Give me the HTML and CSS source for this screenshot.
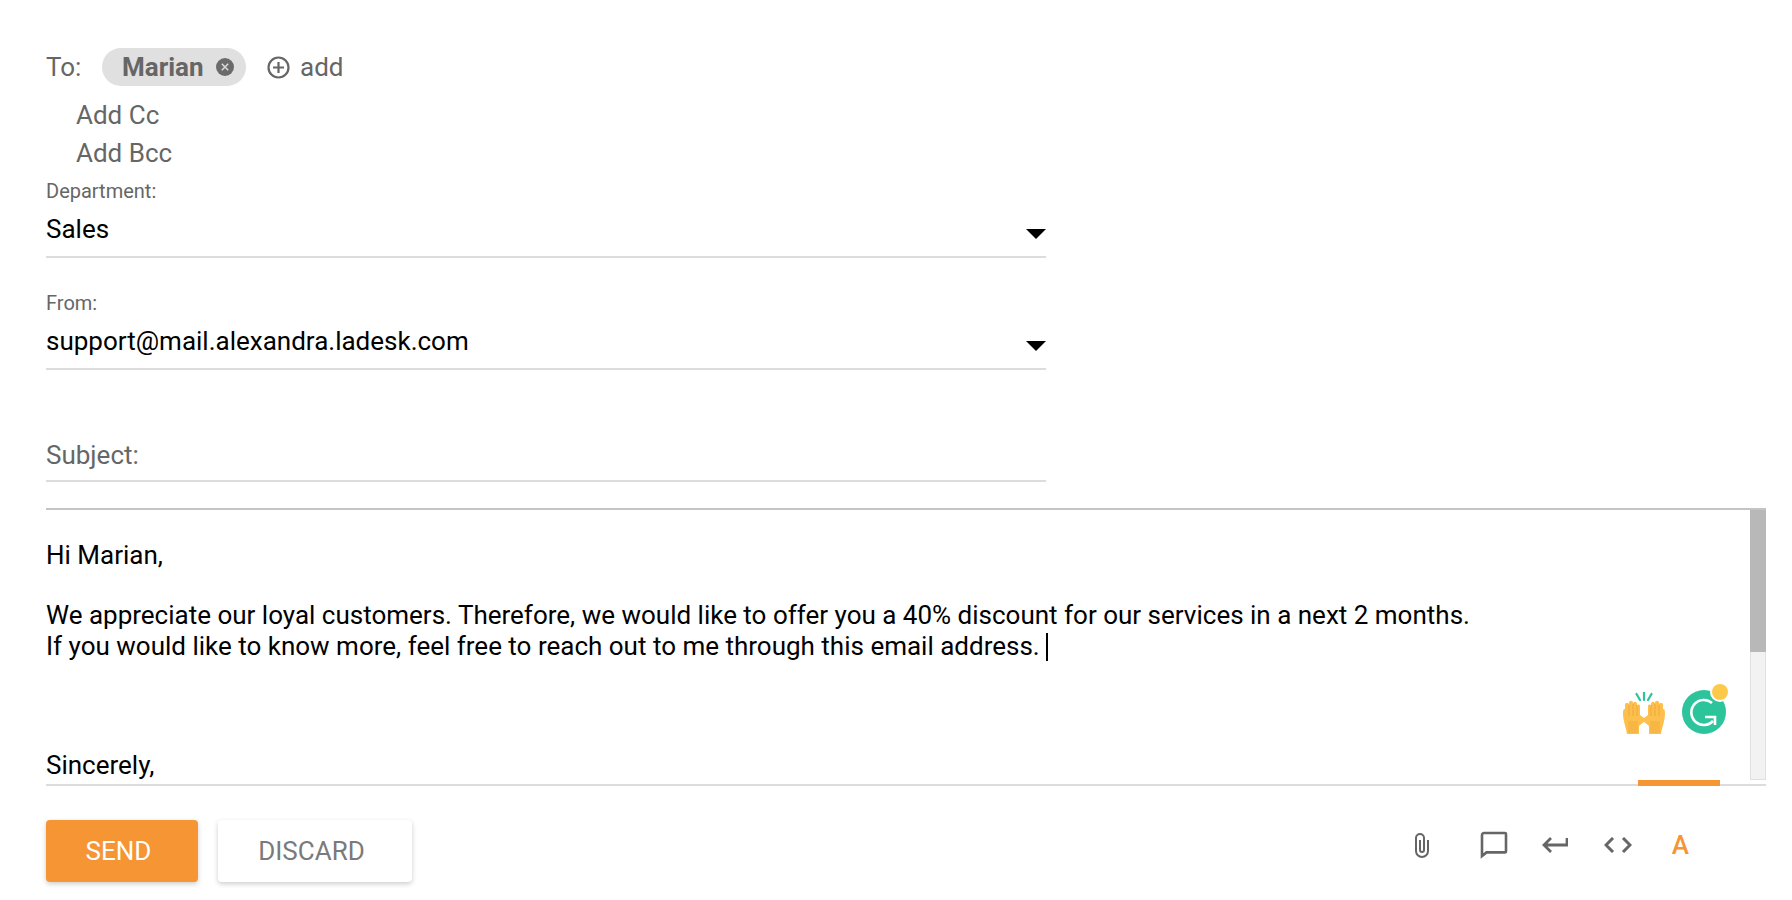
FILE: index.html
```html
<!DOCTYPE html>
<html lang="en">
<head>
  <meta charset="UTF-8" />
  <title>Compose email</title>
  <link rel="stylesheet" href="styles.css">
</head>
<body>

<div class="composer">
  <div class="to-row">
    <span class="to-label">To:</span>
    <span class="chip">
      <span class="chip-name">Marian</span>
      <svg class="chip-close" width="18" height="18" viewBox="0 0 18 18">
        <circle cx="9" cy="9" r="9" fill="#6b6b6b"/>
        <path d="M5.800 5.800l6.400 6.400M12.200 5.800l-6.400 6.400" stroke="#d8d8d8" stroke-width="1.600"/>
      </svg>
    </span>
    <span class="add-recipient">
      <svg width="23" height="23" viewBox="0 0 23 23" fill="none" stroke="#666" stroke-width="2.200">
        <circle cx="11.500" cy="11.500" r="10"/>
        <path d="M11.500 6v11M6 11.500h11"/>
      </svg>
      add
    </span>
  </div>
  <div class="add-link">Add Cc</div>
  <div class="add-link">Add Bcc</div>

  <div class="field field-department">
    <label class="field-label">Department:</label>
    <div class="select-value">Sales<span class="caret"></span></div>
  </div>
  <div class="field field-from">
    <label class="field-label">From:</label>
    <div class="select-value">support@mail.alexandra.ladesk.com<span class="caret"></span></div>
  </div>
  <div class="subject">Subject:</div>
</div>

<div class="editor">
  <div class="editor-text">
    <p>Hi Marian,</p>
    <p>&nbsp;</p>
    <p class="gap">We appreciate our loyal customers. Therefore, we would like to offer you a 40% discount for our services in a next 2 months.</p>
    <p>If you would like to know more, feel free to reach out to me through this email address. <span class="cursor"></span></p>
    <p>&nbsp;</p>
    <p>&nbsp;</p>
    <p class="closing">Sincerely,</p>
  </div>
  <div class="scrollbar"><div class="scroll-thumb"></div></div>
  <svg class="hands" width="44" height="42" viewBox="0 0 44 42">
    <path d="M14.500 2l3.500 6M22 0v8M29.500 2L26 8" stroke="#2cc49a" stroke-width="2.200" stroke-linecap="round"/>
    <path d="M1 21C1 16 3 17 3 17V13c0-3 4-3 4 0v-2c0-3 4-3 4 0v1c0-3 4-3 4 0v2c0-2 3-2 3 0v9l4 3 1 3-6 5v8H5C4 35 1 29 1 21z" fill="#fdc04c"/>
    <path d="M43 21C43 16 41 17 41 17V13c0-3-4-3-4 0v-2c0-3-4-3-4 0v1c0-3-4-3-4 0v2c0-2-3-2-3 0v9l-4 3-1 3 6 5v8h12C40 35 43 29 43 21z" fill="#fdc04c"/>
    <path d="M7 13v11M11 12v12M15 13v11M37 13v11M33 12v12M29 13v11" stroke="#eca93e" stroke-width="1"/>
    <path d="M6 29h10v12H6zM28 29h10v12H28z" fill="#f4ab3c" opacity=".5"/>
  </svg>
  <svg class="grammarly" width="46" height="50" viewBox="0 0 46 50">
    <circle cx="22" cy="28" r="22" fill="#2cc49a"/>
    <circle cx="38" cy="8" r="10" fill="#fff"/>
    <circle cx="38" cy="8" r="8" fill="#fdc94a"/>
    <path d="M30 19A12.500 12.500 0 1 0 31 37M23 33H33V41" fill="none" stroke="#fff" stroke-width="2.600"/>
  </svg>
  <div class="orange-mark"></div>
</div>

<div class="footer">
  <div class="buttons">
    <button class="send-button">SEND</button>
    <button class="discard-button">DISCARD</button>
  </div>
  <div class="tools">
    <svg class="clip-tool" width="16" height="26" viewBox="0 0 16 26" fill="none" stroke="#666" stroke-width="2">
      <path d="M14 8V19a6 6 0 0 1-12 0V6a4 4 0 0 1 8 0V18a2 2 0 0 1-4 0V8"/>
    </svg>
    <svg width="28" height="28" viewBox="0 0 28 28" fill="none" stroke="#666" stroke-width="2.600">
      <path d="M2 25V4c0-1 1-2 2-2h21c.6 0 1 .4 1 1v17c0 1-.4 1.400-1 1.400H6.500z"/>
    </svg>
    <svg class="return-tool" width="26" height="16" viewBox="0 0 26 16" fill="none" stroke="#666" stroke-width="2.800">
      <path d="M25 1V8H3M9 1L2 8l7 7"/>
    </svg>
    <svg class="code-tool" width="28" height="16" viewBox="0 0 28 16" fill="none" stroke="#666" stroke-width="3">
      <path d="M9 1L2 8l7 7M19 1l7 7-7 7"/>
    </svg>
    <span class="font-tool">A</span>
  </div>
</div>

</body>
</html>
```

FILE: styles.css
```css
* {
  box-sizing: border-box;
}

body, html {
  margin: 0;
  padding: 0;
  height: 900px;
  overflow: hidden;
  background-color: #ffffff;
  font-family: Roboto, Arial, sans-serif;
}

.composer {
  padding: 48px 0 0 46px;
  width: 1046px;
}

.to-row {
  display: flex;
  align-items: center;
  height: 38px;
  font-size: 26px;
  color: #666666;
}

.to-label {
  width: 56px;
}

.chip {
  display: flex;
  align-items: center;
  width: 144px;
  height: 38px;
  padding-left: 20px;
  border-radius: 19px;
  background-color: #e0e0e0;
}

.chip-name {
  font-weight: 700;
  color: #666666;
}

.chip-close {
  margin-left: 12px;
}

.add-recipient {
  display: flex;
  align-items: center;
  gap: 10px;
  margin-left: 21px;
}

.add-link {
  height: 38px;
  line-height: 38px;
  padding-left: 30px;
  font-size: 26px;
  color: #666666;
}

.add-link:nth-child(2) {
  margin-top: 10px;
}

.field-label {
  display: block;
  height: 22px;
  line-height: 22px;
  font-size: 20px;
  color: #666666;
}

.select-value {
  position: relative;
  height: 56px;
  padding-top: 12px;
  line-height: 30px;
  font-size: 26px;
  color: #000000;
  border-bottom: 2px solid #dcdcdc;
}

.caret {
  position: absolute;
  right: 0;
  top: 27px;
  border-left: 10px solid transparent;
  border-right: 10px solid transparent;
  border-top: 10px solid #000000;
}

.field-department {
  margin-top: 8px;
}

.field-from {
  margin-top: 34px;
}

.subject {
  margin-top: 61px;
  height: 51px;
  padding-top: 9px;
  line-height: 30px;
  font-size: 26px;
  color: #666666;
  border-bottom: 2px solid #dcdcdc;
}

.editor {
  position: relative;
  margin: 26px 26px 0 46px;
  height: 278px;
  border-top: 2px solid #c4c4c4;
  border-bottom: 2px solid #dcdcdc;
}

.editor-text {
  height: 274px;
  overflow: hidden;
  padding-top: 30px;
  font-size: 26px;
  line-height: 31px;
  color: #000000;
}

.editor-text p {
  margin: 0;
}

.editor-text .gap {
  margin-top: -2px;
}

.editor-text .closing {
  margin-top: 26px;
}

.cursor {
  display: inline-block;
  width: 2px;
  height: 28px;
  vertical-align: -6px;
  background-color: #000000;
}

.scrollbar {
  position: absolute;
  right: 0;
  top: 0;
  bottom: 4px;
  width: 16px;
  background-color: #f2f2f2;
  border-left: 1px solid #e0e0e0;
  border-right: 1px solid #e0e0e0;
  border-bottom: 1px solid #e0e0e0;
}

.scroll-thumb {
  height: 142px;
  margin: 0 -1px;
  background-color: #b8b8b8;
}

.hands {
  position: absolute;
  left: 1576px;
  top: 182px;
}

.grammarly {
  position: absolute;
  left: 1636px;
  top: 174px;
}

.orange-mark {
  position: absolute;
  left: 1592px;
  bottom: -2px;
  width: 82px;
  height: 6px;
  background-color: #f59533;
}

.footer {
  display: flex;
  justify-content: space-between;
  padding: 34px 0 0 46px;
}

.buttons {
  display: flex;
  gap: 20px;
}

.send-button, .discard-button {
  height: 62px;
  padding: 0 7px 0 0;
  border: none;
  border-radius: 4px;
  font-family: Roboto, Arial, sans-serif;
  font-size: 26px;
  box-shadow: 0 2px 5px rgba(0, 0, 0, 0.2);
}

.send-button {
  width: 152px;
  background-color: #f59533;
  color: #ffffff;
}

.discard-button {
  width: 194px;
  background-color: #ffffff;
  color: #7a7a7a;
}

.tools {
  display: flex;
  align-items: center;
  align-self: flex-start;
  gap: 34px;
  height: 50px;
  margin-right: 103px;
}

.clip-tool {
  margin-right: 16px;
}

.return-tool {
  margin-right: 2px;
}

.code-tool {
  margin-right: 6px;
}

.font-tool {
  font-size: 26px;
  font-weight: 500;
  color: #f59533;
}
```
